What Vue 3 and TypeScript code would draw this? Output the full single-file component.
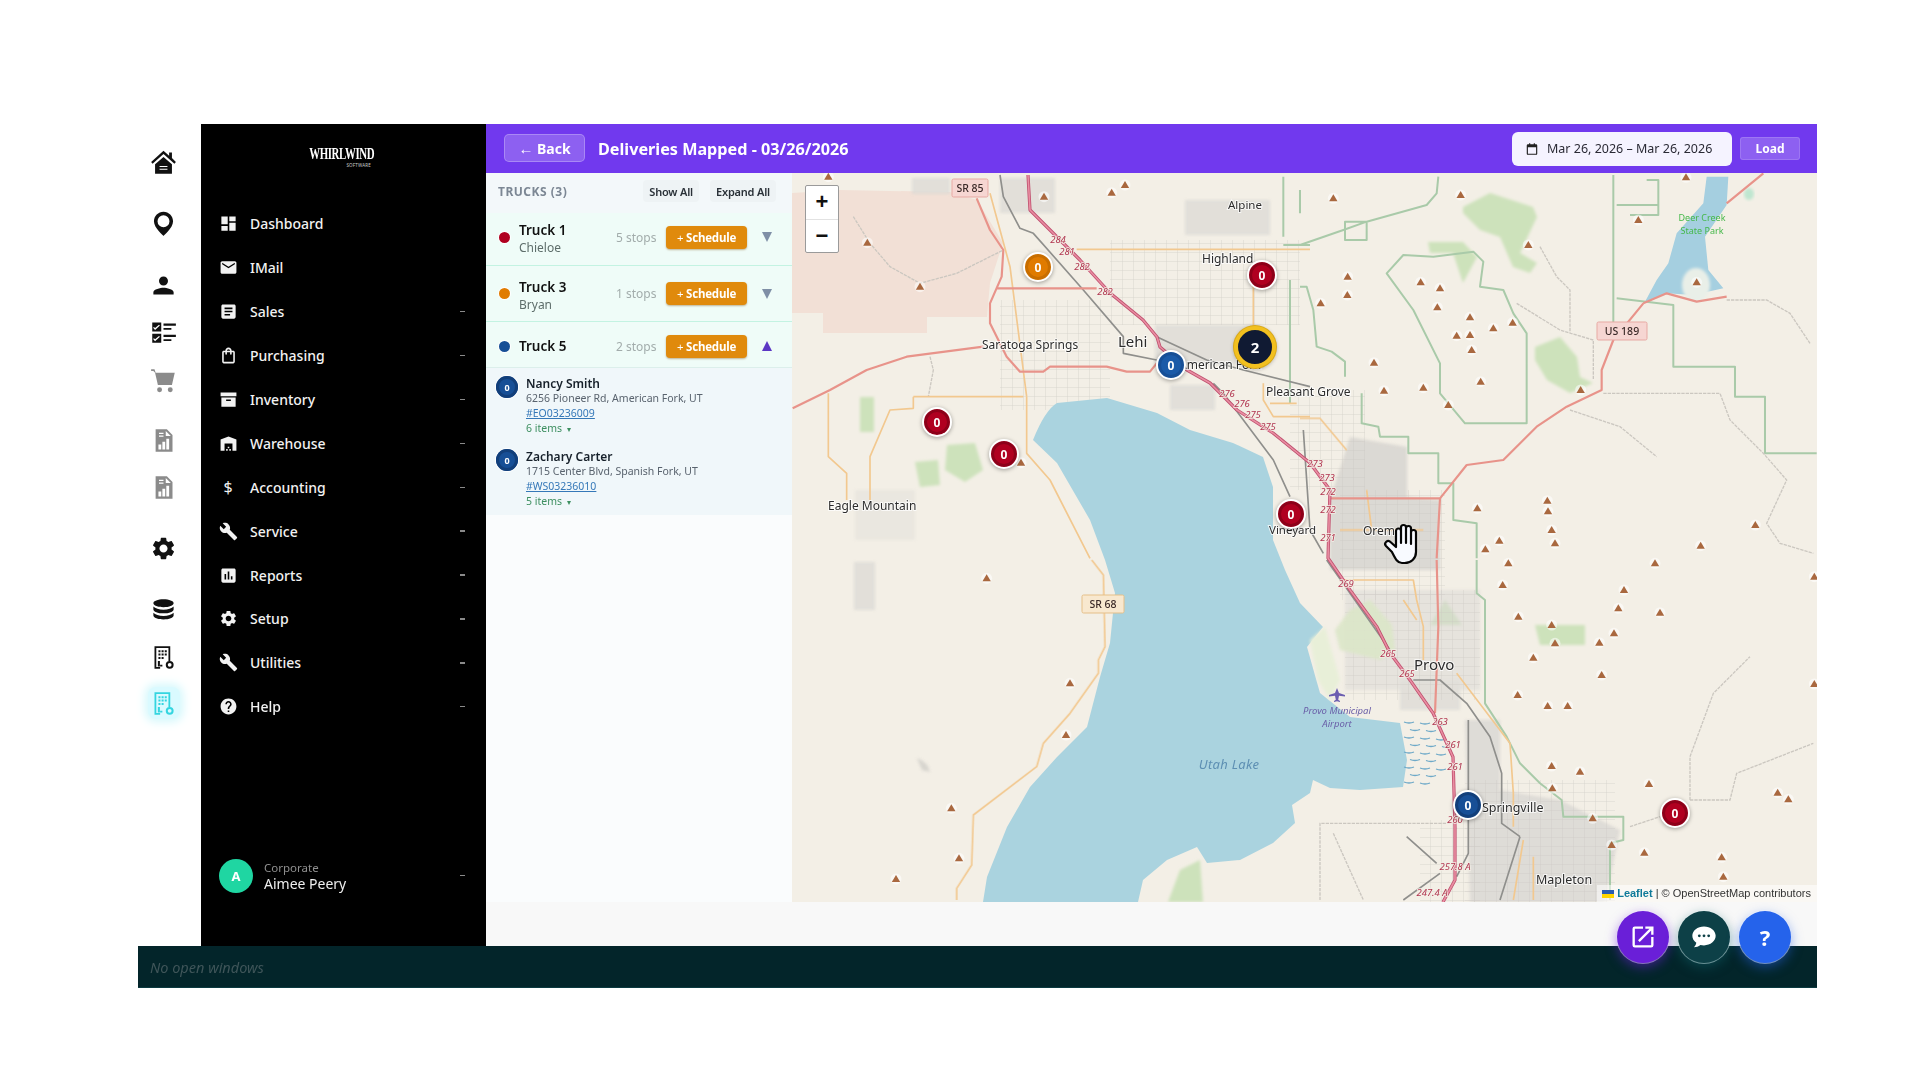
<script setup lang="ts">
type Shape = { d: string; c?: string }
type RailIcon = { gap: number; tone?: string; shapes: Shape[] }

const gear =
  'M19.14 12.94c.04-.3.06-.61.06-.94 0-.32-.02-.64-.07-.94l2.03-1.58c.18-.14.23-.41.12-.61l-1.92-3.32c-.12-.22-.37-.29-.59-.22l-2.39.96c-.5-.38-1.03-.7-1.62-.94l-.36-2.54c-.04-.24-.24-.41-.48-.41h-3.84c-.24 0-.43.17-.47.41l-.36 2.54c-.59.24-1.13.57-1.62.94l-2.39-.96c-.22-.08-.47 0-.59.22L2.74 8.87c-.12.21-.08.47.12.61l2.03 1.58c-.05.3-.09.63-.09.94s.02.64.07.94l-2.03 1.58c-.18.14-.23.41-.12.61l1.92 3.32c.12.22.37.29.59.22l2.39-.96c.5.38 1.03.7 1.62.94l.36 2.54c.05.24.24.41.48.41h3.84c.24 0 .44-.17.47-.41l.36-2.54c.59-.24 1.13-.56 1.62-.94l2.39.96c.22.08.47 0 .59-.22l1.92-3.32c.12-.22.07-.47-.12-.61l-2.01-1.58zM12 15.6c-1.98 0-3.6-1.62-3.6-3.6s1.62-3.6 3.6-3.6 3.6 1.62 3.6 3.6-1.62 3.6-3.6 3.6z'
const wrench =
  'M22.7 19l-9.1-9.1c.9-2.3.4-5-1.5-6.9-2-2-5-2.4-7.4-1.3L9 6 6 9 1.6 4.7C.4 7.1.9 10.1 2.9 12.1c1.9 1.9 4.6 2.4 6.9 1.5l9.1 9.1c.4.4 1 .4 1.4 0l2.3-2.3c.5-.4.5-1.1.1-1.4z'
const calc =
  'M4 2h14v13h-1.6V3.6H5.6v16.8H9V22H4z M7.5 5.5h1.8v1.8H7.5z M10.3 5.5h1.8v1.8h-1.8z M13.1 5.5h1.8v1.8h-1.8z M7.5 8.5h1.8v1.8H7.5z M10.3 8.5h1.8v1.8h-1.8z M13.1 8.5h1.8v1.8h-1.8z M7.5 11.5h1.8v1.8H7.5z M10.3 11.5h1.8v1.8h-1.8z M7 15h1.8v5H7z M9 18.5h2V20H9z M17.5 15a3.5 3.5 0 1 1 0 7 3.5 3.5 0 0 1 0-7z M17.5 16.8a1.7 1.7 0 1 0 0 3.4 1.7 1.7 0 0 0 0-3.4z'
const docChart =
  'M5 2h10l5 5v15H5z M14 3.5V8h4.5z M8 5h4v1.2H8z M8 7.5h4v1.2H8z M7.5 15.5h2.5V20H7.5z M11 13h2.5v7H11z M14.5 10.5H17V20h-2.5z'

const railIcons: RailIcon[] = [
  { gap: 22, shapes: [{ d: 'M17 3h2.500v5L23 11.500 21.700 13 12 4.500 2.300 13 1 11.500 12 1.500l5 4.500z M4.500 13.500 12 7l7.500 6.500V22h-15z' }, { d: 'M8.500 15h7v1h-7z M8.500 17.500h7v1h-7z', c: 'cut' }] },
  { gap: 29, shapes: [{ d: 'M12 1.500c-4.700 0-8.500 3.800-8.500 8.500 0 6 8.500 13 8.500 13s8.500-7 8.500-13c0-4.700-3.800-8.500-8.500-8.500zm0 3.200a5.300 5.300 0 1 1 0 10.600 5.300 5.300 0 0 1 0-10.600z' }] },
  { gap: 30, shapes: [{ d: 'M12 12c2.210 0 4-1.790 4-4s-1.790-4-4-4-4 1.790-4 4 1.790 4 4 4zm0 2c-2.670 0-9 1.340-9 4v2h18v-2c0-2.660-6.330-4-9-4z' }] },
  { gap: 15, shapes: [{ d: 'M2 3h8v8H2z M12 4h11v2H12z M12 8h7v1.500h-7z M2 13h8v8H2z M12 14h11v2H12z M12 18h7v1.500h-7z' }, { d: 'M3.500 7l1 1 3.500-3 .8.8-4.300 4L2.800 7.800z M3.500 17l1 1 3.500-3 .8.8-4.300 4-1.700-2z', c: 'cut' }] },
  { gap: 16, tone: 'gray', shapes: [{ d: 'M1 2h3l1 3h17l-2.500 11H7L4.500 5 3 3.500H1z M8.500 18a2.200 2.200 0 1 1 0 4.400 2.200 2.200 0 0 1 0-4.400z M18 18a2.200 2.200 0 1 1 0 4.400 2.200 2.200 0 0 1 0-4.400z' }] },
  { gap: 28, tone: 'gray', shapes: [{ d: docChart }] },
  { gap: 15, tone: 'gray', shapes: [{ d: docChart }] },
  { gap: 29, shapes: [{ d: gear }] },
  { gap: 30, shapes: [{ d: 'M12 2c5 0 9 1.500 9 3.500S17 9 12 9 3 7.500 3 5.500 7 2 12 2z M3 8.500c1.500 1.800 5 2.800 9 2.800s7.500-1 9-2.800V11c0 2-4 3.500-9 3.500S3 13 3 11z M3 14c1.500 1.800 5 2.800 9 2.800s7.500-1 9-2.800v2.500c0 2-4 3.500-9 3.500s-9-1.500-9-3.500z' }] },
  { gap: 15, shapes: [{ d: calc }] },
  { gap: 14, tone: 'cyan', shapes: [{ d: calc }] },
]

const menu = [
  { label: 'Dashboard', icon: 'M3 13h8V3H3v10zm0 8h8v-6H3v6zm10 0h8V11h-8v10zm0-18v6h8V3h-8z' },
  { label: 'IMail', icon: 'M20 4H4c-1.100 0-2 .9-2 2v12c0 1.100.9 2 2 2h16c1.100 0 2-.9 2-2V6c0-1.100-.9-2-2-2zm0 4l-8 5-8-5V6l8 5 8-5v2z' },
  { label: 'Sales', more: true, icon: 'M19 3H5c-1.100 0-2 .9-2 2v14c0 1.100.9 2 2 2h14c1.100 0 2-.9 2-2V5c0-1.100-.9-2-2-2zm-5 14H7v-2h7v2zm3-4H7v-2h10v2zm0-4H7V7h10v2z' },
  { label: 'Purchasing', more: true, icon: 'M18 6h-2c0-2.210-1.790-4-4-4S8 3.790 8 6H6c-1.100 0-2 .9-2 2v12c0 1.100.9 2 2 2h12c1.100 0 2-.9 2-2V8c0-1.100-.9-2-2-2zm-6-2c1.100 0 2 .9 2 2h-4c0-1.100.9-2 2-2zm6 16H6V8h2v2c0 .55.45 1 1 1s1-.45 1-1V8h4v2c0 .55.45 1 1 1s1-.45 1-1V8h2v12z' },
  { label: 'Inventory', more: true, icon: 'M2 3h20v5H2z M3 9.500h18V21H3z M9 12v2h6v-2z' },
  { label: 'Warehouse', more: true, icon: 'M22 21V7L12 3 2 7v14h5v-9h10v9h5zm-11-2H9v2h2v-2zm2-3h-2v2h2v-2zm2 3h-2v2h2v-2z' },
  { label: 'Accounting', more: true, glyph: '$' },
  { label: 'Service', more: true, icon: wrench },
  { label: 'Reports', more: true, icon: 'M19 3H5c-1.100 0-2 .9-2 2v14c0 1.100.9 2 2 2h14c1.100 0 2-.9 2-2V5c0-1.100-.9-2-2-2zM9 17H7v-7h2v7zm4 0h-2V7h2v10zm4 0h-2v-4h2v4z' },
  { label: 'Setup', more: true, icon: gear },
  { label: 'Utilities', more: true, icon: wrench },
  { label: 'Help', more: true, icon: 'M12 2C6.480 2 2 6.480 2 12s4.480 10 10 10 10-4.480 10-10S17.520 2 12 2zm1 17h-2v-2h2v2zm2.070-7.750l-.9.92C13.450 12.900 13 13.500 13 15h-2v-.5c0-1.100.45-2.100 1.170-2.830l1.240-1.260c.37-.36.59-.86.59-1.410 0-1.100-.9-2-2-2s-2 .9-2 2H8c0-2.210 1.790-4 4-4s4 1.790 4 4c0 .88-.36 1.680-.93 2.250z' },
]

const trucks = [
  { key: 't1', name: 'Truck 1', driver: 'Chieloe', stops: '5 stops', color: '#b00020', open: false },
  { key: 't3', name: 'Truck 3', driver: 'Bryan', stops: '1 stops', color: '#e07b00', open: false },
  { key: 't5', name: 'Truck 5', driver: '', stops: '2 stops', color: '#174f96', open: true },
]
const stops = [
  { name: 'Nancy Smith', addr: '6256 Pioneer Rd, American Fork, UT', ref: '#EO03236009', items: '6 items' },
  { name: 'Zachary Carter', addr: '1715 Center Blvd, Spanish Fork, UT', ref: '#WS03236010', items: '5 items' },
]

type Grp = 'a' | 'b' | 'c' | 'd'
const origin: Record<Grp, [number, number]> = { a: [790, 170], b: [1300, 170], c: [790, 560], d: [1300, 560] }
const xf = (g: Grp) => `translate(${origin[g][0]} ${origin[g][1]}) scale(.33333)`

const lines: { g: Grp; c: string; d: string }[] = [
  { g: 'b', c: 'bound', d: 'M260 310L310 255 400 260 520 245 550 275 540 350 610 360 640 430 680 490 680 760 495 760 420 670 420 580 340 420Z' },
  { g: 'b', c: 'bound', d: 'M940 15V460M950 385L1120 405V590H1305V680H1395V850H1550M950 105H1075V135H990M1040 30H1075V105' },
  { g: 'b', c: 'bound', d: 'M0 225L130 180 200 155 380 105 410 70 415 20M135 155H200V210H135Z' },
  { g: 'b', c: 'bound', d: 'M0 350H20L40 420 50 530 95 545 135 575V620M185 670V760L235 770 240 800H325V850H415V940H460V1050L530 1060V1165' },
  { g: 'd', c: 'bound', d: 'M530 0V100L555 120V430L620 530 660 610 720 670 785 720 790 770H970V840L930 850V1020' },
  { g: 'a', c: 'bound', d: 'M1480 20V200M1480 225H1560M1530 60V130M1500 330V700' },
  { g: 'b', c: 'track', d: 'M650 400L780 480 880 510V630M720 230L770 320 810 360V490M910 670H1260L1290 750 1390 850 1460 930 1400 1060 1440 1120 1540 1150M1280 390H1400L1470 430 1530 520M810 720L960 770 1070 860' },
  { g: 'd', c: 'track', d: 'M1170 720V590L1240 400 1350 290M1170 720H1290L1310 640 1540 550M60 1020V790H450M990 800L1080 770M100 820L190 1020' },
  { g: 'a', c: 'track', d: 'M190 140L240 220 300 290 390 340 500 310 640 240M420 560L430 600 415 680' },
  { g: 'a', c: 'sec', d: 'M860 238H1560M370 680H700M370 680V715L300 720 240 860V990M710 680V850L780 930 900 1165M115 670V860L170 910V990M1390 330V470M600 70L660 290 710 680M1420 640V690L1450 740H1560M1440 700H1520' },
  { g: 'c', c: 'sec', d: 'M905 0L940 45 945 260 925 300V340L840 460 760 550 740 620 550 765 545 915 500 985V1020' },
  { g: 'b', c: 'sec', d: 'M0 745H60L140 840M120 1080H370M200 960L215 1080' },
  { g: 'd', c: 'sec', d: 'M130 60H340L350 120 370 200V300M470 340L630 550 640 700V800M700 890V1020M670 840L640 1020M310 120L350 180' },
  { g: 'a', c: 'railway', d: 'M630 15L640 80 690 175 730 190 880 360 1000 500V550L1100 570M1100 500L1250 570 1360 600 1560 650M1270 640L1300 670 1450 870 1500 980' },
  { g: 'b', c: 'railway', d: 'M10 780L30 1080 70 1150' },
  { g: 'd', c: 'railway', d: 'M80 0L270 270M340 360H420L500 430 570 530 605 640V790L660 830M505 480V880L470 950M660 830L600 1020M320 830L410 910M420 940L310 1020' },
  { g: 'a', c: 'trunk', d: 'M560 85L600 180 640 240 635 320 600 400V460L650 560 690 605H760L780 590H950L1010 605H1080L1100 580M620 355H920M8 715L120 660 230 600 350 560 580 530' },
  { g: 'b', c: 'trunk', d: 'M1390 10L1280 100M1030 400L1100 370 1190 395 1280 380M1030 400L940 510 905 600V660L800 710 710 770 610 870 500 885 420 985H90M420 985L410 1165' },
  { g: 'd', c: 'trunk', d: 'M410 0L415 200 405 460' },
]

const mtor = 'M1028 175L1030 210 1053 233 1080 260 1110 293 1143 320 1157 337 1160 347 1187 370 1210 383 1237 410 1273 433 1310 463 1330 490 1328 558 1350 590 1377 627 1390 653 1410 680 1433 713 1453 757 1455 827 1455 880 1443 902'

const peakSets: Record<Grp, number[][]> = {
  a: [[232, 218], [390, 350], [693, 878], [1005, 45], [965, 68], [762, 80], [115, 20]],
  b: [[100, 85], [482, 75], [1158, 22], [1015, 150], [685, 225], [143, 320], [142, 375], [62, 400], [362, 337], [420, 355], [412, 412], [510, 442], [580, 475], [638, 458], [470, 497], [510, 495], [515, 540], [222, 578], [252, 662], [370, 653], [542, 635], [445, 705], [842, 660], [1190, 337], [742, 992], [744, 1024], [755, 1080], [765, 1120], [598, 1112], [532, 1015], [556, 1138], [1202, 1127], [1366, 1065]],
  c: [[590, 55], [840, 370], [828, 525], [484, 745], [507, 895], [318, 957]],
  d: [[625, 10], [608, 75], [1065, 10], [972, 90], [955, 145], [1080, 158], [655, 170], [755, 195], [765, 250], [898, 248], [942, 220], [700, 293], [905, 345], [653, 405], [743, 438], [803, 438], [755, 618], [840, 635], [757, 685], [1047, 672], [1433, 698], [1465, 718], [878, 775], [935, 855], [1033, 878], [1265, 892], [1270, 950], [1543, 50], [1543, 372]],
}
const peaks = (Object.keys(peakSets) as Grp[]).flatMap((g) =>
  peakSets[g].map(([x, y]) => [origin[g][0] + x / 3, origin[g][1] + y / 3]),
)

const wet: string[] = []
for (let r = 0; r < 9; r++) {
  for (let k = 0; k < 3; k++) {
    const x = 1404 + k * 16 + (r % 2) * 6
    const y = 722 + r * 7.5 + k
    if (x + 10 < 1456 - Math.abs(r - 3) * 2) wet.push(`M${x} ${y}q5 2 10 0`)
  }
}

const miles = [
  ['284', 1058, 243], ['281', 1067, 255], ['282', 1082, 270], ['282', 1105, 295],
  ['276', 1227, 397], ['276', 1242, 407], ['275', 1253, 418], ['275', 1268, 430],
  ['273', 1315, 467], ['273', 1327, 481], ['272', 1328, 495], ['272', 1328, 513],
  ['271', 1328, 541], ['269', 1346, 587], ['265', 1388, 657], ['265', 1407, 677],
  ['263', 1440, 725], ['261', 1453, 748], ['261', 1455, 770], ['260', 1455, 823],
  ['257.8 A', 1455, 870], ['247.4 A', 1432, 896],
]

const towns = [
  { t: 'Alpine', x: 1228, y: 209, s: 11.5 },
  { t: 'Highland', x: 1202, y: 263, s: 12 },
  { t: 'Saratoga Springs', x: 982, y: 349, s: 12 },
  { t: 'Lehi', x: 1118, y: 347, s: 15 },
  { t: 'American Fork', x: 1179, y: 369, s: 12 },
  { t: 'Pleasant Grove', x: 1266, y: 396, s: 12 },
  { t: 'Eagle Mountain', x: 828, y: 510, s: 12 },
  { t: 'Vineyard', x: 1269, y: 534, s: 11.5 },
  { t: 'Orem', x: 1363, y: 535, s: 12 },
  { t: 'Provo', x: 1414, y: 670, s: 15 },
  { t: 'Springville', x: 1482, y: 812, s: 12.5 },
  { t: 'Mapleton', x: 1536, y: 884, s: 12.5 },
]

const shields = [
  { t: 'SR 85', x: 970, y: 188, w: 36, cls: 'sh-pink' },
  { t: 'SR 68', x: 1103, y: 604, w: 42, cls: 'sh-tan' },
  { t: 'US 189', x: 1622, y: 331, w: 50, cls: 'sh-pink' },
]

const pins = [
  { x: 1038, y: 267, d: 30, bg: '#e07b00', ring: '#c86e00', n: '0' },
  { x: 1262, y: 275, d: 30, bg: '#b00020', ring: '#8d0019', n: '0' },
  { x: 1171, y: 365, d: 30, bg: '#1a5aa8', ring: '#174f96', n: '0' },
  { x: 937, y: 422, d: 30, bg: '#b00020', ring: '#8d0019', n: '0' },
  { x: 1004, y: 454, d: 30, bg: '#b00020', ring: '#8d0019', n: '0' },
  { x: 1291, y: 514, d: 30, bg: '#b00020', ring: '#8d0019', n: '0' },
  { x: 1468, y: 805, d: 30, bg: '#174f96', ring: '#123f7a', n: '0' },
  { x: 1675, y: 813, d: 30, bg: '#b00020', ring: '#8d0019', n: '0' },
]
const at = (x: number, y: number, d: number) => ({ left: `${x - 792 - d / 2}px`, top: `${y - 173 - d / 2}px` })
</script>

<template>
  <div class="page">
    <div class="frame">
      <div class="main">
        <aside class="rail">
          <div
            v-for="(ic, i) in railIcons"
            :key="i"
            class="rail-item"
            :class="ic.tone"
            :style="{ marginTop: ic.gap + 'px' }"
          >
            <svg viewBox="0 0 24 24" class="rail-svg">
              <path v-for="(s, j) in ic.shapes" :key="j" :d="s.d" :class="s.c" fill-rule="evenodd" />
            </svg>
          </div>
        </aside>

        <nav class="side">
          <div class="logo">
            <span class="logo-name">WHIRLWIND</span>
            <span class="logo-sub">SOFTWARE</span>
          </div>
          <div class="menu">
            <div v-for="m in menu" :key="m.label" class="menu-row">
              <span class="menu-ic">
                <svg v-if="m.icon" viewBox="0 0 24 24"><path :d="m.icon" fill-rule="evenodd" /></svg>
                <span v-else class="menu-glyph">{{ m.glyph }}</span>
              </span>
              <span class="menu-label">{{ m.label }}</span>
              <span v-if="m.more" class="menu-more"></span>
            </div>
          </div>
          <div class="user">
            <span class="avatar">A</span>
            <span class="user-text">
              <span class="user-org">Corporate</span>
              <span class="user-name">Aimee Peery</span>
            </span>
            <span class="menu-more"></span>
          </div>
        </nav>

        <section class="content">
          <header class="bar">
            <button class="back"><span class="back-arrow">←</span> Back</button>
            <h1 class="title">Deliveries Mapped - 03/26/2026</h1>
            <div class="date">
              <svg viewBox="0 0 24 24" class="cal"><path d="M7 2h2v2h6V2h2v2h2a2 2 0 0 1 2 2v14a2 2 0 0 1-2 2H5a2 2 0 0 1-2-2V6a2 2 0 0 1 2-2h2zM5 9v11h14V9z" fill-rule="evenodd" /></svg>
              <span>Mar 26, 2026 – Mar 26, 2026</span>
            </div>
            <button class="load">Load</button>
          </header>

          <div class="body">
            <div class="panel">
              <div class="panel-head">
                <span class="panel-title">TRUCKS (3)</span>
                <span class="panel-actions">
                  <button class="ghost">Show All</button>
                  <button class="ghost">Expand All</button>
                </span>
              </div>
              <div v-for="t in trucks" :key="t.name" class="truck" :class="[t.key, { open: t.open }]">
                <span class="dot" :style="{ background: t.color }"></span>
                <span class="truck-id">
                  <span class="truck-name">{{ t.name }}</span>
                  <span v-if="t.driver" class="truck-driver">{{ t.driver }}</span>
                </span>
                <span class="truck-stops">{{ t.stops }}</span>
                <button class="sched"><span class="sched-plus">+</span> Schedule</button>
                <span class="tri" :class="{ up: t.open }"></span>
              </div>
              <div class="stops">
                <div v-for="s in stops" :key="s.name" class="stop">
                  <span class="stop-badge">0</span>
                  <div class="stop-text">
                    <div class="stop-name">{{ s.name }}</div>
                    <div class="stop-addr">{{ s.addr }}</div>
                    <a class="stop-ref">{{ s.ref }}</a>
                    <div class="stop-items">{{ s.items }} <span class="stop-caret">▾</span></div>
                  </div>
                </div>
              </div>
            </div>

            <div class="map">
              <svg class="tiles" viewBox="792 173 1025 729" width="1025" height="729">
                <defs>
                  <pattern id="streets" width="11" height="9" patternUnits="userSpaceOnUse">
                    <path d="M0 0H11M0 0V9" stroke="#c9c6c0" stroke-width=".8" fill="none" />
                  </pattern>
                  <filter id="soft" x="-10%" y="-10%" width="120%" height="120%"><feGaussianBlur stdDeviation="1.5" /></filter>
                  <filter id="soft2" x="-10%" y="-10%" width="120%" height="120%"><feGaussianBlur stdDeviation=".5" /></filter>
                </defs>
                <rect x="792" y="173" width="1025" height="729" fill="#f3efe6" />
                <path d="M792 193L840 190 950 192 977 200 1003 243 990 283 987 317 927 317V333L823 333V313H792Z" fill="#f2e0d6" />

                <g fill="#cde2bb" filter="url(#soft)">
                  <path d="M1463 207L1490 193 1533 207 1537 217 1520 253 1537 263 1530 273 1513 267 1500 237 1480 230 1463 213Z" />
                  <path d="M1428 242H1463L1477 257 1463 283 1453 253H1430Z" />
                  <path d="M1535 347L1560 337 1577 357 1580 377 1593 383 1570 393 1547 380 1535 360Z" />
                  <path d="M1535 625H1585V645H1540Z" />
                  <path d="M1445 600L1462 625H1430Z" />
                  <path d="M947 445L975 443 983 470 965 482 945 470Z" />
                  <path d="M915 462L938 460 940 485 920 487Z" />
                  <path d="M860 397H874V432H860Z" />
                  <path d="M1168 902L1180 870 1200 860 1203 902Z" />
                </g>

                <g filter="url(#soft)" fill="#dcdad5" opacity=".78">
                  <rect x="1000" y="178" width="55" height="35" />
                  <rect x="912" y="178" width="38" height="16" />
                  <rect x="1185" y="200" width="85" height="35" />
                  <rect x="1155" y="325" width="100" height="40" />
                  <rect x="1170" y="385" width="45" height="25" />
                  <rect x="855" y="490" width="60" height="50" opacity=".45" />
                  <rect x="854" y="562" width="21" height="48" />
                  <path d="M1350 437L1407 447V497L1440 500V570L1330 570V500Z" fill="#d4d2ce" />
                  <rect x="1345" y="590" width="135" height="100" opacity=".7" />
                  <path d="M1465 720L1500 720 1500 790 1560 800 1620 830 1605 902H1470Z" fill="#d8d6d2" />
                  <rect x="1400" y="680" width="60" height="30" />
                  <path d="M917 758Q928 762 930 772L922 770Z" fill="#cfcdc8" />
                </g>

                <g fill="url(#streets)" opacity=".75">
                  <rect x="1000" y="300" width="110" height="110" />
                  <rect x="1110" y="240" width="190" height="85" />
                  <rect x="1290" y="390" width="75" height="100" />
                  <rect x="1340" y="490" width="105" height="110" />
                  <rect x="1345" y="590" width="135" height="110" />
                  <rect x="1465" y="780" width="150" height="122" />
                  <rect x="1420" y="820" width="60" height="82" />
                </g>

                <path
                  fill="#aad3df"
                  d="M1033 440Q1045 410 1057 403L1107 398 1157 413 1190 430 1233 443 1263 457 1273 487 1273 540 1285 570 1300 603 1323 627 1307 647 1320 693 1350 717 1400 723 1407 760 1403 787 1360 790 1330 788 1313 780 1310 793 1292 805 1295 823 1273 843 1240 860 1207 863 1197 847 1167 860 1143 880 1138 902H983L987 877 1007 827 1030 787 1057 757 1087 727 1100 677 1110 643 1115 593 1105 560 1090 520 1057 463Z"
                />
                <path d="M1370 600L1392 625 1395 650 1380 660 1340 650 1335 630 1350 610Z" fill="#dbe6c8" opacity=".9" filter="url(#soft)" />
                <path d="M1310 640L1325 627 1340 680 1330 700 1318 680Z" fill="#e8efd8" filter="url(#soft)" />

                <path v-for="(w, i) in wet" :key="'w' + i" :d="w" class="wet" />

                <g fill="#a5cfe0" filter="url(#soft2)" transform="translate(1300 170) scale(.33333)">
                  <path d="M1220 20H1285L1280 105 1215 200 1225 300 1270 355 1180 375 1100 370 1035 395 1070 330 1105 280 1130 190 1210 100Z" />
                </g>
                <ellipse cx="1696" cy="285" rx="14" ry="17" fill="#e9efe8" filter="url(#soft)" />
                <ellipse cx="1749" cy="194" rx="5" ry="6" fill="#bfe6d0" filter="url(#soft)" />

                <g filter="url(#soft2)">
                  <path v-for="(l, i) in lines" :key="'l' + i" :d="l.d" :class="l.c" :transform="xf(l.g)" />
                  <path :d="mtor" class="moto-o" />
                  <path :d="mtor" class="moto-i" />
                </g>

                <g v-for="(p, i) in peaks" :key="'p' + i" :transform="`translate(${p[0]} ${p[1]})`">
                  <circle r="5.5" fill="#fff" opacity=".55" />
                  <path d="M0-4L4.200 3H-4.200Z" fill="#a9683f" />
                </g>

                <text v-for="m in miles" :key="m[0] + '-' + m[1]" class="mile" :x="m[1]" :y="m[2]">{{ m[0] }}</text>
                <text v-for="t in towns" :key="t.t" class="town" :x="t.x" :y="t.y" :font-size="t.s">{{ t.t }}</text>

                <text class="lake" x="1229" y="769">Utah Lake</text>
                <path d="M1337 688l2 5 6 2v1.500l-6-.8-.8 4 1.800 1.300v1l-3-.8-3 .8v-1l1.800-1.300-.8-4-6 .8V695l6-2z" fill="#6c5fb0" />
                <text class="air" x="1337" y="714">Provo Municipal</text>
                <text class="air" x="1337" y="727">Airport</text>
                <text class="park" x="1702" y="221">Deer Creek</text>
                <text class="park" x="1702" y="234">State Park</text>

                <g v-for="s in shields" :key="s.t" :class="s.cls">
                  <rect :x="s.x - s.w / 2" :y="s.y - 9" :width="s.w" height="18" rx="1.5" />
                  <text :x="s.x" :y="s.y + 4">{{ s.t }}</text>
                </g>
              </svg>

              <div class="zoom">
                <span class="zoom-btn">+</span>
                <span class="zoom-btn">−</span>
              </div>

              <span
                v-for="(p, i) in pins"
                :key="i"
                class="pin"
                :style="{ ...at(p.x, p.y, p.d), width: p.d + 'px', height: p.d + 'px', background: p.bg, boxShadow: `inset 0 0 0 3px ${p.ring}, 0 1px 4px rgba(0,0,0,.35)` }"
              >{{ p.n }}</span>
              <span class="cluster" :style="at(1255, 347, 42)">2</span>

              <svg class="hand" :style="at(1404, 543, 44)" viewBox="0 0 44 44">
                <path d="M10 31L4 25a3 3 0 0 1 4.500-4L14 26V10a2.500 2.500 0 0 1 5 0V22 6.500a2.500 2.500 0 0 1 5 0V22 7.500a2.500 2.500 0 0 1 5 0V23 11.500a2.500 2.500 0 0 1 5 0V31c0 6.500-5 11-11.500 11H20c-5 0-7-5-10-11z" fill="#f8faff" stroke="#050505" stroke-width="2.200" stroke-linejoin="round" />
              </svg>

              <div class="attr">
                <svg class="flag" viewBox="0 0 12 8"><path d="M0 0h12v4H0z" fill="#2a5db0" /><path d="M0 4h12v4H0z" fill="#ffd500" /></svg>
                <a class="attr-link">Leaflet</a> | © OpenStreetMap contributors
              </div>
            </div>
          </div>
          <div class="strip"></div>
        </section>
      </div>

      <footer class="task">No open windows</footer>

      <div class="fabs">
        <button class="fab fab-a">
          <svg viewBox="0 0 24 24"><path d="M19 19H5V5h7V3H5a2 2 0 0 0-2 2v14a2 2 0 0 0 2 2h14a2 2 0 0 0 2-2v-7h-2zM14 3v2h3.590l-9.830 9.830 1.410 1.410L19 6.410V10h2V3z" /></svg>
        </button>
        <button class="fab fab-b">
          <svg viewBox="0 0 24 24"><path d="M12 3C6.500 3 2 6.600 2 11c0 2.400 1.300 4.500 3.400 6-.2 1.500-1 2.900-2 3.800 2 0 4-.7 5.500-1.900 1 .2 2 .3 3.100.3 5.500 0 10-3.700 10-8.200S17.500 3 12 3z" /><circle cx="8" cy="11" r="1.200" class="fab-dot" /><circle cx="12" cy="11" r="1.200" class="fab-dot" /><circle cx="16" cy="11" r="1.200" class="fab-dot" /></svg>
        </button>
        <button class="fab fab-c">?</button>
      </div>
    </div>
  </div>
</template>

<style>
html, body { margin: 0; background: #fff; }
</style>

<style scoped>
.page {
  width: 1920px;
  height: 1080px;
  padding: 124px 103px 92px 138px;
  box-sizing: border-box;
  font-family: "Noto Sans", "Open Sans", sans-serif;
  color: #111;
  overflow: hidden;
}
.frame { position: relative; display: flex; flex-direction: column; height: 864px; filter: blur(.35px); }
.main { display: flex; height: 822px; }

.rail { width: 63px; flex: none; box-sizing: border-box; padding-right: 12px; display: flex; flex-direction: column; align-items: center; background: #fff; }
.rail-item { width: 32px; height: 32px; display: flex; align-items: center; justify-content: center; border-radius: 8px; color: #111; }
.rail-item.gray { color: #8b8b8b; }
.rail-item.cyan { color: #34d5e0; background: #dafaff; box-shadow: 0 0 10px 3px #d4f8fc; }
.rail-svg { width: 27px; height: 27px; fill: currentColor; }
.cut { fill: #fff; }
.cyan .cut { fill: #dafaff; }

.side { width: 285px; flex: none; background: #000; color: #f2f2f2; display: flex; flex-direction: column; }
.logo { height: 78px; box-sizing: border-box; padding-top: 22px; display: flex; flex-direction: column; align-items: center; line-height: 1; }
.logo-name { font-family: "Liberation Serif", serif; font-size: 16px; font-weight: 700; letter-spacing: -.6px; color: #fff; transform: scaleX(.68); margin-left: -3px; }
.logo-sub { font-size: 4.5px; letter-spacing: .2px; color: #ccc; align-self: flex-end; margin-right: 115px; margin-top: 1px; }
.menu { display: flex; flex-direction: column; }
.menu-row { height: 43.9px; display: flex; align-items: center; padding: 0 20px 0 16px; }
.menu-ic { width: 22px; height: 22px; display: flex; align-items: center; justify-content: center; margin-right: 11px; }
.menu-ic svg { width: 19px; height: 19px; fill: #f2f2f2; }
.menu-glyph { font-size: 16px; color: #f2f2f2; }
.menu-label { font-size: 14px; font-weight: 500; flex: 1; }
.menu-more { width: 5px; height: 1.5px; background: #8a8a8a; flex: none; margin-right: 1px; }
.user { margin-top: auto; height: 99px; box-sizing: border-box; padding: 0 20px 42px 18px; display: flex; align-items: center; }
.avatar { width: 34px; height: 34px; border-radius: 50%; background: #1fd6a2; color: #fff; font-size: 13px; font-weight: 700; display: flex; align-items: center; justify-content: center; flex: none; }
.user-text { display: flex; flex-direction: column; margin-left: 11px; flex: 1; line-height: 16px; }
.user-org { font-size: 11.5px; color: #8f8f8f; }
.user-name { font-size: 14px; color: #eee; }

.content { flex: 1; display: flex; flex-direction: column; min-width: 0; }
.bar { height: 49px; flex: none; display: flex; align-items: center; background: #7139ee; padding: 0 17px 0 18px; color: #fff; }
.back { height: 28px; width: 81px; margin: 0 13px 2px 0; padding: 0; border: 1px solid rgba(255, 255, 255, .25); border-radius: 5px; background: rgba(255, 255, 255, .2); color: #fff; font: 700 14px "Noto Sans", sans-serif; }
.back-arrow { font-weight: 400; font-size: 15px; }
.title { margin: 0; font-size: 16.2px; font-weight: 700; color: #fff; flex: 1; }
.date { width: 220px; height: 34px; box-sizing: border-box; padding-left: 13px; background: #f5f3ff; border-radius: 6px; display: flex; align-items: center; font-size: 12.5px; color: #2a2a35; }
.cal { width: 14px; height: 14px; fill: #222; margin-right: 8px; flex: none; }
.load { width: 60px; height: 23px; margin: 0 0 0 8px; padding: 0; border: 1px solid rgba(255, 255, 255, .15); border-radius: 3px; background: rgba(255, 255, 255, .2); color: #fff; font: 700 12px "Noto Sans", sans-serif; }

.body { display: flex; height: 729px; flex: none; }
.panel { width: 306px; flex: none; background: #fafcfd; box-sizing: border-box; }
.panel-head { height: 40px; padding: 0 16px 4px 12px; box-sizing: border-box; display: flex; align-items: center; justify-content: space-between; background: #f3f8fa; }
.panel-title { font-size: 12px; font-weight: 700; letter-spacing: .5px; color: #7c8794; }
.panel-actions { display: flex; gap: 11px; }
.ghost { height: 22px; padding: 0 6px; border: 0; border-radius: 4px; background: #eef3f5; color: #2a3138; font: 600 11px "Noto Sans", sans-serif; letter-spacing: -.2px; }
.truck { background: #effcf8; border-bottom: 1px solid #c3f3e2; display: flex; align-items: center; padding: 0 15px 0 13px; box-sizing: border-box; }
.t1 { height: 53px; padding-bottom: 4px; }
.t1 .truck-id { margin-top: 4px; }
.t3 { height: 56px; }
.t3 .truck-id { margin-top: 4px; }
.t5 { height: 46px; padding-top: 3px; border-bottom-color: #dcefeb; }
.dot { width: 11px; height: 11px; border-radius: 50%; flex: none; margin-right: 9px; box-shadow: 0 0 0 1px #fff; }
.truck-id { display: flex; flex-direction: column; width: 97px; line-height: 17px; }
.truck-name { font-size: 13.5px; font-weight: 600; color: #111; }
.truck-driver { font-size: 12px; color: #5d6d6a; }
.truck-stops { width: 48px; font-size: 12px; color: #a2acab; white-space: nowrap; }
.sched { width: 81px; height: 23px; margin: 0 15px 0 2px; padding: 0; border: 0; border-radius: 4px; background: #e08a0c; color: #fff; font: 700 11.5px "Noto Sans", sans-serif; box-shadow: 0 1px 2px rgba(120, 70, 0, .4); white-space: nowrap; letter-spacing: -.2px; }
.sched-plus { font-weight: 400; }
.tri { width: 0; height: 0; border-left: 5px solid transparent; border-right: 5px solid transparent; border-top: 10px solid #7f8fa6; }
.tri.up { border-top: 0; border-bottom: 10px solid #5b37c4; }
.stops { background: #f0f7fa; height: 147px; padding-top: 8px; box-sizing: border-box; }
.stop { height: 73px; display: flex; padding-left: 10px; }
.stop-badge { width: 22px; height: 22px; border-radius: 50%; background: #174f96; color: #fff; font-size: 9px; font-weight: 700; display: flex; align-items: center; justify-content: center; flex: none; box-shadow: inset 0 0 0 3px #123f7a, 0 0 0 1px #fff; }
.stop-text { margin-left: 8px; line-height: 15px; }
.stop-name { font-size: 12px; font-weight: 600; color: #16202a; }
.stop-addr { font-size: 10.5px; color: #59636e; white-space: nowrap; }
.stop-ref { display: block; font-size: 10.5px; color: #3578b8; text-decoration: underline; }
.stop-items { font-size: 10.5px; color: #3d8f60; }
.stop-caret { font-size: 8px; color: #3d8f60; margin-left: 2px; }

.map { position: relative; flex: 1; overflow: hidden; background: #f3efe6; }
.tiles { display: block; }
.tiles text { font-family: "Noto Sans", sans-serif; }
.bound { fill: none; stroke: #a9caa9; stroke-width: 6; stroke-linejoin: round; }
.track { fill: none; stroke: #cbc7c0; stroke-width: 4; stroke-dasharray: 10 3; }
.sec { fill: none; stroke: #f2c88f; stroke-width: 5; stroke-linejoin: round; }
.railway { fill: none; stroke: #8f8f8c; stroke-width: 5; stroke-linejoin: round; }
.trunk { fill: none; stroke: #e8938a; stroke-width: 6.5; stroke-linejoin: round; }
.moto-o { fill: none; stroke: #bf4f6e; stroke-width: 3.2; stroke-linejoin: round; }
.moto-i { fill: none; stroke: #e98ea2; stroke-width: 1.6; stroke-linejoin: round; }
.wet { fill: none; stroke: #6ea9c8; stroke-width: 1.3; }
.mile { font-size: 9.5px; font-style: italic; fill: #b0344f; text-anchor: middle; paint-order: stroke; stroke: #f3efe6; stroke-width: 1.5px; }
.town { fill: #2c2c2c; paint-order: stroke; stroke: rgba(255, 255, 255, .75); stroke-width: 2px; }
.lake { font-size: 13px; font-style: italic; fill: #5d8fb3; text-anchor: middle; letter-spacing: .3px; }
.air { font-size: 9.5px; font-style: italic; fill: #6a5fa8; text-anchor: middle; }
.park { font-size: 9px; fill: #45b84a; text-anchor: middle; }
.sh-pink rect { fill: #f6d6d2; stroke: #e7a9a3; }
.sh-tan rect { fill: #f8e8cf; stroke: #e5bf88; }
.sh-pink text, .sh-tan text { font-size: 10.5px; font-weight: 500; fill: #3b2a28; text-anchor: middle; }

.zoom { position: absolute; left: 13px; top: 12px; width: 34px; height: 68px; box-sizing: border-box; background: #fff; border: 1px solid #9a9a9a; border-radius: 2px; display: flex; flex-direction: column; }
.zoom-btn { height: 33px; display: flex; align-items: center; justify-content: center; font: 700 22px "Liberation Sans", sans-serif; color: #111; }
.zoom-btn:first-child { border-bottom: 1px solid #e2e2e2; }
.pin { position: absolute; box-sizing: border-box; border: 2px solid #fff; border-radius: 50%; color: #fff; font-size: 12px; font-weight: 700; display: flex; align-items: center; justify-content: center; }
.cluster { position: absolute; width: 42px; height: 42px; box-sizing: border-box; border-radius: 50%; background: #101a33; border: 4px solid #f2c01f; box-shadow: 0 0 0 1px #d9a91a, 0 1px 4px rgba(0, 0, 0, .35); color: #fff; font-size: 15px; font-weight: 700; display: flex; align-items: center; justify-content: center; }
.hand { position: absolute; width: 44px; height: 44px; }
.attr { position: absolute; right: 0; bottom: 0; height: 17px; padding: 0 3px 0 5px; background: rgba(255, 255, 255, .55); display: flex; align-items: center; font: 11px/17px "Liberation Sans", sans-serif; color: #333; white-space: pre; }
.flag { width: 12px; height: 8px; margin-right: 3px; }
.attr-link { color: #0f7a9a; font-weight: 600; }

.strip { flex: 1; background: #f8f8f8; }
.task { height: 42px; flex: none; background: #03252a; color: #3f5559; font-size: 14.5px; font-style: italic; display: flex; align-items: center; padding-left: 12px; border-bottom: 1px solid #0b3a40; box-sizing: border-box; }
.fabs { position: absolute; right: 26px; bottom: 25px; display: flex; gap: 9px; }
.fab { width: 52px; height: 52px; padding: 0; border: 0; border-radius: 50%; display: flex; align-items: center; justify-content: center; color: #fff; }
.fab svg { width: 28px; height: 28px; fill: #fff; }
.fab-a { background: #6a1fd8; box-shadow: 0 4px 12px rgba(106, 31, 216, .55), 0 0 0 1px rgba(255, 255, 255, .6); }
.fab-b { background: #0d4047; box-shadow: 0 4px 12px rgba(13, 100, 110, .5), 0 0 0 1px rgba(255, 255, 255, .6); }
.fab-c { background: #2563eb; box-shadow: 0 4px 12px rgba(37, 99, 235, .5), 0 0 0 1px rgba(255, 255, 255, .6); font: 700 22px "Noto Sans", sans-serif; }
.fab-dot { fill: #0d4047; }
</style>
